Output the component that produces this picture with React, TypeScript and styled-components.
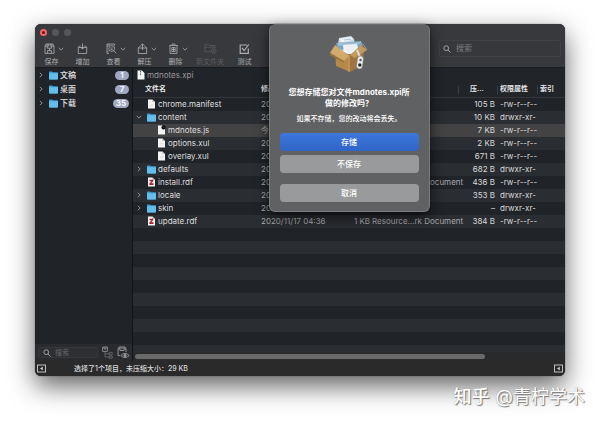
import React from "react";
import styled, { createGlobalStyle, css } from "styled-components";

const GlobalStyle = createGlobalStyle`
  * { box-sizing: border-box; }
  body {
    margin: 0;
    background: #fff;
    font-family: Inter, "Noto Sans CJK SC", sans-serif;
    font-size: 8px;
    line-height: 13px;
    color: #dededf;
    overflow: hidden;
  }
  button, input { font: inherit; color: inherit; margin: 0; padding: 0; border: 0; background: none; }
  h1, p { margin: 0; }
`;

const Page = styled.div`
  display: flex;
  flex-direction: column;
  min-height: 100vh;
  padding: 24px 35px 0;
`;

const Window = styled.main`
  position: relative;
  flex: 1;
  display: flex;
  flex-direction: column;
  border-radius: 6px;
  background: #212429;
  box-shadow: 0 0 1px rgba(0, 0, 0, 0.8), 0 10px 26px rgba(0, 0, 0, 0.62);
`;

const TitleBar = styled.header`
  height: 44px;
  background: #38393c;
  border-bottom: 1px solid #1b1c1e;
  border-radius: 6px 6px 0 0;
`;

const Lights = styled.div`
  display: flex;
  gap: 5px;
  padding: 5px 0 0 5px;
  height: 16px;
`;

const Light = styled.button<{ $close?: boolean }>`
  display: grid;
  place-items: center;
  width: 7px;
  height: 7px;
  border-radius: 50%;
  background: ${(p) => (p.$close ? "#f2676a" : "#555659")};
  &::after {
    content: "";
    display: ${(p) => (p.$close ? "block" : "none")};
    width: 3px;
    height: 3px;
    border-radius: 50%;
    background: #64151b;
  }
`;

const ToolRow = styled.div`
  display: flex;
  align-items: flex-start;
  justify-content: space-between;
  padding: 0 4px 0 1px;
`;

const Tools = styled.div`
  display: flex;
`;

const Tool = styled.button<{ $dim?: boolean; $wide?: boolean }>`
  display: flex;
  flex-direction: column;
  align-items: center;
  width: ${(p) => (p.$wide ? 38 : 31)}px;
  color: ${(p) => (p.$dim ? "#5b5c5f" : "#adaeb0")};
  font-size: 7px;
  line-height: 9px;
  white-space: nowrap;
`;

const ToolIcon = styled.span<{ $menu?: boolean }>`
  display: flex;
  align-items: center;
  gap: 3px;
  height: 17px;
  padding-left: ${(p) => (p.$menu ? 4 : 0)}px;
`;

const SearchBox = styled.label<{ $side?: boolean }>`
  display: flex;
  align-items: center;
  gap: ${(p) => (p.$side ? 4 : 5)}px;
  width: ${(p) => (p.$side ? 60 : 122)}px;
  height: ${(p) => (p.$side ? 11 : 17)}px;
  padding-left: ${(p) => (p.$side ? 4 : 3)}px;
  border: 1px solid ${(p) => (p.$side ? "#36373a" : "#404144")};
  border-radius: 2px;
  background: ${(p) => (p.$side ? "#2e2f32" : "#37383b")};
  color: #a0a1a3;
  font-size: ${(p) => (p.$side ? 7 : 8)}px;
  input {
    min-width: 0;
    flex: 1;
    height: 9px;
    outline: none;
  }
  input::placeholder { color: ${(p) => (p.$side ? "#66676a" : "#7d7e81")}; }
`;

const Body = styled.div`
  flex: 1;
  display: grid;
  grid-template-columns: 98px 1fr;
`;

const Sidebar = styled.nav`
  display: flex;
  flex-direction: column;
  border-right: 1px solid #121417;
  background: #202328;
`;

const Place = styled.a`
  display: grid;
  grid-template-columns: 11px 11px 1fr auto;
  align-items: center;
  height: 14px;
  padding: 0 3px 0 3px;
  color: #e2e2e3;
  font-weight: 500;
  text-decoration: none;
`;

const Badge = styled.span`
  min-width: 14px;
  height: 9px;
  padding: 0 3px;
  border-radius: 5px;
  background: #9fa8c2;
  color: #f4f5fa;
  font-weight: 700;
  line-height: 9px;
  text-align: center;
`;

const SideFooter = styled.div`
  display: flex;
  align-items: center;
  gap: 4px;
  height: 17px;
  margin-top: auto;
  padding-left: 3px;
  background: #2a2b2e;
  color: #98999c;
`;

const ToolButton = styled.button`
  display: flex;
`;

const Content = styled.section`
  display: flex;
  flex-direction: column;
  min-width: 0;
`;

const PathBar = styled.div`
  display: flex;
  align-items: center;
  gap: 2px;
  height: 14px;
  padding-left: 4px;
  background: #212429;
  color: #97989b;
`;

const FileTable = styled.table`
  width: 100%;
  table-layout: fixed;
  border-collapse: collapse;
`;

const Col = styled.col<{ $w?: number }>`
  width: ${(p) => (p.$w ? `${p.$w}px` : "auto")};
`;

const HeadCell = styled.th<{ $line?: boolean; $first?: boolean }>`
  height: 15px;
  padding: 0 0 0 ${(p) => (p.$first ? 12 : 3)}px;
  border-bottom: 1px solid #34363a;
  background: ${(p) =>
    p.$line ? "linear-gradient(#3b3d41, #3b3d41) 0 4px / 1px 8px no-repeat" : "none"};
  color: #e6e6e7;
  font-size: 7px;
  font-weight: 600;
  line-height: 14px;
  text-align: left;
  white-space: nowrap;
`;

const FileRow = styled.tr<{ $selected?: boolean }>`
  background: #202328;
  &:nth-child(even) { background: #2a2d31; }
  ${(p) =>
    p.$selected &&
    css`
      && { background: #434343; }
    `}
`;

const Cell = styled.td<{ $right?: boolean; $muted?: boolean; $kind?: boolean }>`
  height: 13px;
  padding: ${(p) => (p.$kind ? "0" : p.$right ? "0 2px" : "0 0 0 3px")};
  color: ${(p) => (p.$muted ? "#a9aaac" : "#d9d9da")};
  text-align: ${(p) => (p.$right ? "right" : "left")};
  white-space: nowrap;
`;

const NameLine = styled.div<{ $nested?: boolean }>`
  display: grid;
  grid-template-columns: ${(p) => (p.$nested ? 21 : 11)}px 11px 1fr;
  align-items: center;
  height: 13px;
  color: #dededf;
`;

const EmptyRows = styled.div`
  flex: 1;
  background: repeating-linear-gradient(#202328 0 13px, #2a2d31 13px 26px);
`;

const ScrollTrack = styled.div`
  height: 9px;
  padding: 2px 80px 2px 2px;
  background: #292a2c;
`;

const ScrollThumb = styled.div`
  height: 5px;
  border-radius: 3px;
  background: #69696a;
`;

const StatusBar = styled.footer`
  display: flex;
  align-items: center;
  height: 15px;
  padding: 0 2px;
  border-radius: 0 0 6px 6px;
  background: #2a2a2b;
  color: #d8d8d9;
  font-size: 7px;
`;

const StatusText = styled.span`
  flex: 1;
  padding-left: 28px;
  font-weight: 500;
`;

const SheetLayer = styled.div`
  position: absolute;
  top: 0;
  right: 0;
  left: 98px;
  display: flex;
  justify-content: center;
`;

const Sheet = styled.section`
  display: flex;
  flex-direction: column;
  align-items: center;
  width: 161px;
  padding: 9px 10px;
  border: 1px solid #7a7b7c;
  border-top-color: #6b6c6d;
  border-radius: 6px;
  background: #606163;
  box-shadow: 0 0 1px #000, 0 5px 14px rgba(0, 0, 0, 0.65);
  color: #fff;
`;

const SheetTitle = styled.h1`
  margin-top: 13px;
  font-size: 8px;
  font-weight: 700;
  line-height: 11px;
  text-align: center;
  white-space: nowrap;
`;

const SheetText = styled.p`
  margin: 4px 0 9px;
  font-size: 7px;
  font-weight: 500;
  line-height: 11px;
  white-space: nowrap;
`;

const SheetButton = styled.button<{ $primary?: boolean; $apart?: boolean }>`
  width: 100%;
  height: 18px;
  margin-top: ${(p) => (p.$apart ? 11 : p.$primary ? 0 : 4)}px;
  border-radius: 4px;
  background: ${(p) => (p.$primary ? "linear-gradient(#3c77dc, #3065c6)" : "#999a9b")};
  font-weight: 500;
  line-height: 18px;
`;

const Watermark = styled.div`
  display: flex;
  justify-content: flex-end;
  gap: 6px;
  height: 46px;
  margin-right: -20px;
  padding-top: 9px;
  color: #fff;
  font-size: 18px;
  line-height: 24px;
  text-shadow: 1px 1px 1px #777, 0 0 1px #999;
  z-index: 1;
  strong { font-weight: 500; }
`;

const Chevron = ({ down }: { down?: boolean }) => (
  <svg width="6" height="6" viewBox="0 0 6 6" fill="none" stroke="#8f9093" strokeWidth="1">
    <path d={down ? "M0.8 1.8 3 4.2 5.2 1.8" : "M1.8 0.8 4.2 3 1.8 5.2"} />
  </svg>
);

const Folder = () => (
  <svg width="9" height="9" viewBox="0 0 9 9">
    <path d="M0 1.2Q0 .5 .7 .5H3L4 1.3H8.3Q9 1.3 9 2V7.8Q9 8.5 8.3 8.5H.7Q0 8.5 0 7.8Z" fill="#3c9fd5" />
    <path d="M0 2.3H9V7.8Q9 8.5 8.3 8.5H.7Q0 8.5 0 7.8Z" fill="#65bdea" />
  </svg>
);

type Kind = "file" | "folder" | "js" | "rdf";

const Doc = ({ kind = "file" }: { kind?: Kind }) => (
  <svg width="9" height="10" viewBox="0 0 9 10">
    <path d="M1 .5H5.4L8 3.1V9.5H1Z" fill="#f3f3f3" />
    <path d="M5.4 .5V3.1H8Z" fill="#b9babb" />
    {kind === "file" && <path d="M3 5.5H6.4M3 7H6.4" stroke="#dcdcdc" strokeWidth=".6" />}
    {kind === "js" && <circle cx="6.5" cy="2.4" r="2.1" fill="#08090a" />}
    {kind === "js" && <path d="M6 1.6 7.2 2.8" stroke="#ddd" strokeWidth=".4" />}
    {kind === "rdf" && <path d="M2.5 2.7H6.3V4L4.2 6.2H6.5V7.9H2.4V6.4L4.5 4.3H2.5Z" fill="#a51f2c" />}
  </svg>
);

const Archive = () => (
  <svg width="8" height="10" viewBox="0 0 8 10">
    <path d="M.5 .5H4.9L7.5 3.1V9.5H.5Z" fill="#f3f3f3" />
    <path d="M3.6 1V5.2" stroke="#55575a" strokeWidth="1" strokeDasharray="1 .6" />
  </svg>
);

const Magnifier = () => (
  <svg width="8" height="8" viewBox="0 0 8 8" fill="none" stroke="currentColor" strokeWidth="1">
    <circle cx="3.2" cy="3.2" r="2.4" />
    <path d="M5 5 7.5 7.5" />
  </svg>
);

const toolPaths: Record<string, React.ReactNode> = {
  save: (
    <>
      <path d="M1 3.2 2 1H9L10 3.2V10.4H1ZM1 3.2H3.3M7.7 3.2H10M3.3 1V5.2H7.7V1M4.6 1V3.5M6.4 1V3.5" />
      <path d="M3.6 10.2V7.5H7.4V10.2M5.5 5.2V7.5" />
    </>
  ),
  add: <path d="M1.3 4.5H9.7V10.5H1.3ZM1.3 4.5 2.5 3H3.6M9.7 4.5 8.5 3H7.4M5.5 .5V6M4 4.5 5.5 6 7 4.5" />,
  view: (
    <>
      <path d="M3 10.4H1V1H8.5V2.6M1 3H2.6M3 1V3M1.2 8.3H2.5" />
      <circle cx="5.7" cy="5.5" r="2.9" />
      <path d="M7.8 7.7 10.3 10.4M4.4 5H6.9M4.8 6.5H6.6" />
    </>
  ),
  extract: <path d="M1.3 5H9.7V10.5H1.3ZM1.3 5 3.5 2.8M9.7 5 7.5 2.8M5.5 7V.8M3.5 2.8 5.5.8 7.5 2.8" />,
  trash: <path d="M1.2 2.5H9.8M4 2.4V1H7V2.4M2 2.5V10.4H9V2.5M3.8 4.5V8.5H7.2V4.5ZM5.5 4.5V8.5M4 6.5H7" />,
  folder: (
    <>
      <path d="M6.8 8.8H1V1.3H4.2L5.2 2.5H11V5M1 4.2H11" />
      <circle cx="9.7" cy="8" r="2.4" />
      <path d="M9.7 6.8V9.2M8.5 8H10.9" />
    </>
  ),
  test: <path d="M8 2H1.2V10.3H9.3V5.5M3 5 5.2 7.6 9.8 1.5" strokeWidth="1.2" />,
};

const tools = [
  { id: "save", label: "保存", menu: true },
  { id: "add", label: "增加" },
  { id: "view", label: "查看", menu: true },
  { id: "extract", label: "解压", menu: true },
  { id: "trash", label: "删除", menu: true },
  { id: "folder", label: "新文件夹", dim: true, wide: true },
  { id: "test", label: "测试" },
];

const Glyph = ({ id }: { id: string }) => (
  <svg
    width={id === "folder" ? 13 : 11}
    height="12"
    viewBox={id === "folder" ? "0 0 13 12" : "0 0 11 12"}
    fill="none"
    stroke="currentColor"
    strokeWidth=".8"
  >
    {toolPaths[id]}
  </svg>
);

const PanelToggle = () => (
  <svg width="9" height="9" viewBox="0 0 9 9">
    <rect x=".5" y="1" width="8" height="7" fill="none" stroke="#c0c0c1" />
    <path d="M5.8 2.8V6.2L3 4.5Z" fill="#d2d2d3" />
  </svg>
);

const TreeIcon = () => (
  <svg width="11" height="13" viewBox="0 0 11 13" fill="none" stroke="currentColor" strokeWidth=".8">
    <path d="M.6 1H5.4V5.4H.6ZM2 1V3H4V1" />
    <path d="M3 5.4V11H7M3 7.8H7M7.2 6.4H10.2V8.8H7.2ZM7.2 10H10.2V12.2H7.2Z" opacity=".6" />
  </svg>
);

const PreviewIcon = () => (
  <svg width="13" height="13" viewBox="0 0 13 13" fill="none" stroke="currentColor" strokeWidth=".9">
    <path d="M3 9.6H1V3L2 1H8L9 3V6M1 3H3M7 3H9M3 1V4.5H7V1M5 1V3" />
    <path d="M3.8 9.6Q8 5 12.2 9.6Q8 13.6 3.8 9.6Z" />
    <circle cx="8" cy="9.6" r="1.2" fill="currentColor" />
  </svg>
);

const BoxArt = () => (
  <svg width="40" height="40" viewBox="0 0 40 40">
    <path d="M9 10 10 4 22 2 25 5 27 15 10 20Z" fill="#cbdde9" />
    <path d="M10 5 22 3 24 5 13 9Z" fill="#eff4f7" />
    <path d="M15 6 22 5" stroke="#a9c2d2" />
    <path d="M7 9 32 7 34 11 27 18 8 15Z" fill="#7da4bf" />
    <path d="M9 9 32 8 31 10 9 12Z" fill="#a2bfd0" />
    <path d="M14 11 28 10 30 19 15 21Z" fill="#f0f4f7" />
    <path d="M16 13 27 12M17 16 25 15" stroke="#dbe6ed" strokeWidth=".7" />
    <path d="M6 14 21 21V38L7 32Z" fill="#b68849" />
    <path d="M21 21 35 13 34 31 21 38Z" fill="#a07440" />
    <path d="M6 11 20 22 15 27 1 19Z" fill="#d1aa6c" />
    <path d="M1 19 15 27V29L1 21Z" fill="#9d733e" />
    <path d="M21 21 32 11 38 16 26 24Z" fill="#c29a5d" />
    <path d="M20 22V38" stroke="#d0a664" strokeWidth=".8" />
    <path d="M34 10 38 16" fill="none" stroke="#959b9f" />
    <path d="M28 16 31 23" stroke="#d9dbdc" strokeWidth="2" />
    <rect x="28" y="22" width="6" height="13" rx="3" fill="#eceeee" stroke="#6a6c6d" strokeWidth=".5" transform="rotate(8 31 28)" />
    <circle cx="31.5" cy="26" r="1.2" fill="#55585a" />
    <circle cx="30.8" cy="31" r="1.7" fill="#242628" />
  </svg>
);

interface Entry {
  name: string;
  kind: Kind;
  size: string;
  mode: string;
  date?: string;
  full?: string;
  type?: string;
  nested?: boolean;
  open?: boolean;
  selected?: boolean;
}

const FILE = "-rw-r--r--";
const DIR = "drwxr-xr-";
const DAY = "2020/11/17 04:36";

const entries: Entry[] = [
  { name: "chrome.manifest", kind: "file", size: "105 B", mode: FILE },
  { name: "content", kind: "folder", size: "10 KB", mode: DIR, open: true },
  { name: "mdnotes.js", kind: "js", size: "7 KB", mode: FILE, nested: true, selected: true, date: "今天" },
  { name: "options.xul", kind: "file", size: "2 KB", mode: FILE, nested: true },
  { name: "overlay.xul", kind: "file", size: "671 B", mode: FILE, nested: true },
  { name: "defaults", kind: "folder", size: "682 B", mode: DIR },
  { name: "install.rdf", kind: "rdf", size: "436 B", mode: FILE, full: "1 KB", type: "Resource...rk Document" },
  { name: "locale", kind: "folder", size: "353 B", mode: DIR },
  { name: "skin", kind: "folder", size: "–", mode: DIR },
  { name: "update.rdf", kind: "rdf", size: "384 B", mode: FILE, full: "1 KB", type: "Resource...rk Document" },
];

const places = [
  { name: "文稿", count: 1 },
  { name: "桌面", count: 7 },
  { name: "下载", count: 35 },
];

export default function App() {
  return (
    <>
      <GlobalStyle />
      <Page>
        <Window>
          <TitleBar>
            <Lights>
              <Light $close aria-label="关闭" />
              <Light aria-label="最小化" />
              <Light aria-label="缩放" />
            </Lights>
            <ToolRow>
              <Tools>
                {tools.map((t) => (
                  <Tool key={t.id} $dim={t.dim} $wide={t.wide} disabled={t.dim}>
                    <ToolIcon $menu={t.menu}>
                      <Glyph id={t.id} />
                      {t.menu && <Chevron down />}
                    </ToolIcon>
                    {t.label}
                  </Tool>
                ))}
              </Tools>
              <SearchBox>
                <Magnifier />
                <input type="text" placeholder="搜索" aria-label="搜索" />
              </SearchBox>
            </ToolRow>
          </TitleBar>
          <Body>
            <Sidebar>
              {places.map((p) => (
                <Place key={p.name} href="#">
                  <Chevron />
                  <Folder />
                  <span>{p.name}</span>
                  <Badge>{p.count}</Badge>
                </Place>
              ))}
              <SideFooter>
                <SearchBox $side>
                  <Magnifier />
                  <input type="text" placeholder="搜索" aria-label="搜索位置" />
                </SearchBox>
                <ToolButton aria-label="树状显示"><TreeIcon /></ToolButton>
                <ToolButton aria-label="预览"><PreviewIcon /></ToolButton>
              </SideFooter>
            </Sidebar>
            <Content>
              <PathBar>
                <Archive />
                mdnotes.xpi
              </PathBar>
              <FileTable>
                <colgroup>
                  <Col $w={125} />
                  <Col $w={83} />
                  <Col $w={31} />
                  <Col $w={86} />
                  <Col $w={39} />
                  <Col $w={40} />
                  <Col />
                </colgroup>
                <thead>
                  <tr>
                    <HeadCell $first>文件名</HeadCell>
                    <HeadCell>修改</HeadCell>
                    <HeadCell />
                    <HeadCell />
                    <HeadCell $line $first>压...</HeadCell>
                    <HeadCell $line>权限属性</HeadCell>
                    <HeadCell $line>索引</HeadCell>
                  </tr>
                </thead>
                <tbody>
                  {entries.map((e) => (
                    <FileRow key={e.name} $selected={e.selected}>
                      <Cell>
                        <NameLine $nested={e.nested}>
                          {e.kind === "folder" ? <Chevron down={e.open} /> : <span />}
                          {e.kind === "folder" ? <Folder /> : <Doc kind={e.kind} />}
                          <span>{e.name}</span>
                        </NameLine>
                      </Cell>
                      <Cell $muted>{e.date ?? DAY}</Cell>
                      <Cell $right $muted>{e.full}</Cell>
                      <Cell $muted $kind>{e.type}</Cell>
                      <Cell $right>{e.size}</Cell>
                      <Cell>{e.mode}</Cell>
                      <Cell />
                    </FileRow>
                  ))}
                </tbody>
              </FileTable>
              <EmptyRows />
              <ScrollTrack>
                <ScrollThumb />
              </ScrollTrack>
            </Content>
          </Body>
          <StatusBar>
            <ToolButton aria-label="隐藏边栏"><PanelToggle /></ToolButton>
            <StatusText>选择了1个项目，未压缩大小：29 KB</StatusText>
            <ToolButton aria-label="显示检查器"><PanelToggle /></ToolButton>
          </StatusBar>
          <SheetLayer>
            <Sheet role="dialog" aria-labelledby="sheet-title">
              <BoxArt />
              <SheetTitle id="sheet-title">
                您想存储您对文件mdnotes.xpi所
                <br />
                做的修改吗？
              </SheetTitle>
              <SheetText>如果不存储，您的改动将会丢失。</SheetText>
              <SheetButton $primary>存储</SheetButton>
              <SheetButton>不保存</SheetButton>
              <SheetButton $apart>取消</SheetButton>
            </Sheet>
          </SheetLayer>
        </Window>
        <Watermark>
          <strong>知乎</strong>
          <span>@青柠学术</span>
        </Watermark>
      </Page>
    </>
  );
}
